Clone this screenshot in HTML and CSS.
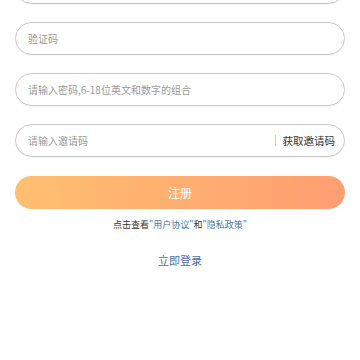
FILE: index.html
```html
<!DOCTYPE html>
<html lang="zh-CN">
<head>
  <meta charset="UTF-8" />
  <meta name="viewport" content="width=device-width, initial-scale=1.0"/>
  <title>注册</title>
  <link rel="stylesheet" href="styles.css">
</head>
<body>

  <div class="register">
    <div class="field">
      <input type="text" placeholder="请输入手机号" />
    </div>
    <div class="field">
      <input type="text" placeholder="验证码" />
    </div>
    <div class="field">
      <input type="password" placeholder="请输入密码,6-18位英文和数字的组合" />
    </div>
    <div class="field">
      <input type="text" placeholder="请输入邀请码" />
      <span class="divider"></span>
      <a class="get-code">获取邀请码</a>
    </div>

    <button class="submit">注册</button>

    <p class="agreement">点击查看<a>"用户协议"</a>和<a>"隐私政策"</a></p>

    <a class="login">立即登录</a>
  </div>

</body>
</html>
```

FILE: styles.css
```css
* { box-sizing: border-box; }

body {
  margin: 0;
  background: #fff;
  font-family: "Noto Sans CJK SC", "Noto Sans", sans-serif;
  color: #333;
}

.register {
  display: flex;
  flex-direction: column;
  padding: 0 15px;
  margin-top: -29px;
}

.field {
  display: flex;
  align-items: center;
  height: 33px;
  border: 1px solid #c9c9c9;
  border-radius: 17px;
  padding: 0 9px 0 12px;
  margin-bottom: 18px;
  box-shadow: 0 1px 1px rgba(0, 0, 0, 0.04);
}

.field input {
  flex: 1;
  min-width: 0;
  border: none;
  outline: none;
  background: transparent;
  padding: 0;
  font-family: inherit;
  font-size: 10px;
  color: #333;
}

.field input::placeholder {
  color: #9a9a9a;
}

.divider {
  width: 1px;
  height: 11px;
  background: #cfcfcf;
  margin-right: 7px;
}

.get-code {
  font-size: 10.5px;
  color: #333;
}

.submit {
  height: 33px;
  border: none;
  border-radius: 17px;
  background: linear-gradient(to right, #ffbf70, #ff9e72);
  color: #fff;
  font-family: inherit;
  font-size: 12px;
  margin-top: 1px;
}

.agreement {
  margin: 10px 0 0;
  text-align: center;
  font-size: 9px;
  line-height: 12px;
  color: #333;
}

.agreement a {
  color: #4c78a8;
}

.login {
  align-self: center;
  margin-top: 22px;
  font-size: 11px;
  line-height: 15px;
  color: #4a6ea3;
}
```
